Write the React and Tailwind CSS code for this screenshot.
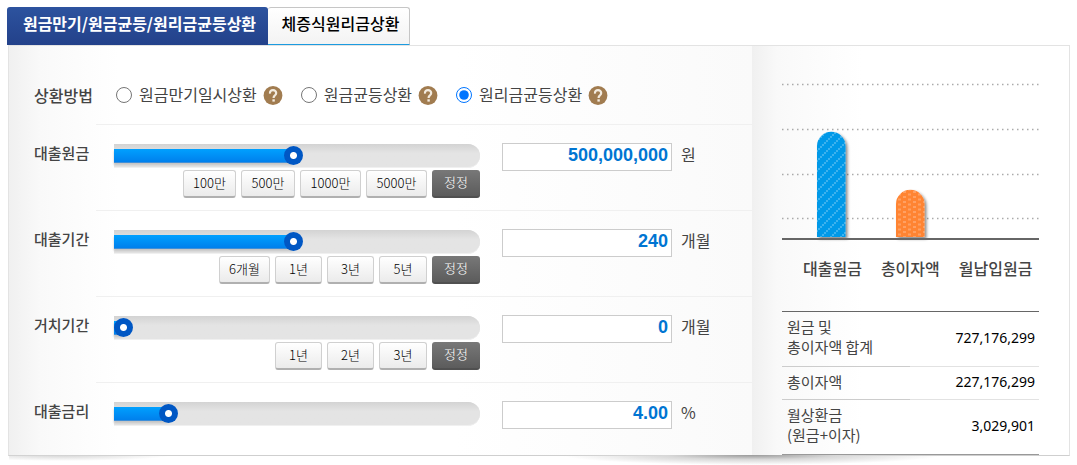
import { useId, useState } from "react";

function HelpButton({ label }) {
  return (
    <button type="button" aria-label={label} className="ml-1.5 size-5 shrink-0">
      <svg viewBox="0 0 20 20" className="size-5">
        <circle cx="10" cy="10.5" r="9.4" fill="#a17c50" />
        <path
          d="M7 8.600C6.700 6.300 8 5.200 10 5.200s3.200 1.100 3.200 2.900c0 1.500-.9 2-1.700 2.700-.7.600-.9 1-.9 2.200"
          fill="none"
          stroke="#f3ebdf"
          strokeWidth="2.200"
        />
        <rect x="9.400" y="14.300" width="2.400" height="2.300" fill="#f3ebdf" />
      </svg>
    </button>
  );
}

function Method({ label, value, selected, onSelect }) {
  const id = useId();
  return (
    <div className="flex items-center">
      <input
        id={id}
        type="radio"
        name="method"
        checked={selected === value}
        onChange={() => onSelect(value)}
        className="size-4 accent-[#0075ff]"
      />
      <label htmlFor={id} className="ml-[7px] pb-0.5 text-base leading-5">
        {label}
      </label>
      <HelpButton label={`${label} 도움말`} />
    </div>
  );
}

function StepButton({ children, wide }) {
  return (
    <button
      type="button"
      className={`h-7 rounded-[3px] border border-b-2 border-[#d0d0d0] border-b-[#b0b0b0] bg-linear-to-b from-white to-[#ebebeb] pb-0.5 text-[13px] leading-5 font-light text-black ${wide}`}
    >
      {children}
    </button>
  );
}

function SliderRow({ label, unit, initial, amount, steps, stepWidths }) {
  const id = useId();
  const [position, setPosition] = useState(initial);
  const [text, setText] = useState(amount);
  return (
    <div className="flex items-start">
      <label htmlFor={id} className="w-[87px] shrink-0 pt-[19px] pl-[25px] text-[15px] leading-5 font-medium">
        {label}
      </label>
      <div className="flex min-w-0 flex-1 items-start border-t border-[#f0f0f0] pt-[18px] pl-[18px]">
        <div className="min-w-0 flex-1">
          <div className="relative mt-px h-6 rounded-r-full border-b border-[#f0f0f0] bg-[#e2e2e2] bg-linear-to-b from-[#d3d3d3] to-[#e4e4e4] to-40%">
            <div
              className="absolute top-[5px] left-0 h-3.5 border-b border-[#3f8fd8] bg-linear-to-b from-[#00a0ff] to-[#0080ec] shadow-[0_2px_2px_#c4c4c4]"
              style={{ width: `calc((100% - 19px) * ${position / 100} + 9px)` }}
            />
            <input
              type="range"
              aria-label={label}
              min="0"
              max="100"
              value={position}
              onChange={(e) => setPosition(Number(e.target.value))}
              className="absolute inset-0 h-full w-full appearance-none bg-transparent [&::-webkit-slider-thumb]:size-[19px] [&::-webkit-slider-thumb]:appearance-none [&::-webkit-slider-thumb]:rounded-full [&::-webkit-slider-thumb]:bg-[radial-gradient(circle,#fff_0,#fff_3px,#0057c4_4px,#0057c4_100%)]"
            />
          </div>
          {steps && (
            <div className="mt-0.5 mb-3 flex justify-end gap-[5px]">
              {steps.map((s, i) => (
                <StepButton key={s} wide={stepWidths[i]}>
                  {s}
                </StepButton>
              ))}
              <button
                type="button"
                className="h-7 w-12 rounded-[3px] border-b-2 border-[#505050] bg-linear-to-b from-[#787878] to-[#5c5c5c] pb-0.5 text-[13px] leading-5 font-light text-white"
              >
                정정
              </button>
            </div>
          )}
        </div>
        <input
          id={id}
          type="text"
          value={text}
          onChange={(e) => setText(e.target.value)}
          className="ml-[22px] h-7 w-[170px] shrink-0 border border-[#ccc] bg-white pr-[3px] pb-1 text-right font-['Liberation_Sans',sans-serif] text-lg leading-5 font-bold text-[#0075d2]"
        />
        <span className="w-20 shrink-0 pt-px pl-[9px] text-base leading-5">{unit}</span>
      </div>
    </div>
  );
}

function Chart() {
  const gridLines = [39, 84, 129, 173];
  return (
    <svg viewBox="0 0 257 196" className="block h-[196px] w-full" role="img" aria-label="대출원금과 총이자액">
      <defs>
        <pattern id="stripes" width="10" height="10" patternUnits="userSpaceOnUse">
          <rect width="10" height="10" fill="#0099e8" />
          <path
            d="M0 8h2v2h-2zM2 6h2v2h-2zM4 4h2v2h-2zM6 2h2v2h-2zM8 0h2v2h-2z"
            fill="#3db2ee"
          />
        </pattern>
        <pattern id="dots" width="10" height="5" patternUnits="userSpaceOnUse">
          <rect width="10" height="5" fill="#ff8432" />
          <path d="M1 0h3v2h-3zM6 2.500h3v2h-3z" fill="#ffa062" />
        </pattern>
        <filter id="shade" x="-20%" y="-10%" width="150%" height="120%">
          <feDropShadow dx="2" dy="2" stdDeviation="1.500" floodOpacity="0.450" />
        </filter>
      </defs>
      {gridLines.map((y) => (
        <line key={y} x1="0" x2="257" y1={y - 0.5} y2={y - 0.5} stroke="#aaa" strokeWidth="1.300" strokeDasharray="1.500 3.500" />
      ))}
      <path d="M35 191V100a14 14 0 0 1 28.500 0V191z" fill="url(#stripes)" filter="url(#shade)" />
      <path d="M114 191V158a14 14 0 0 1 28.500 0V191z" fill="url(#dots)" filter="url(#shade)" />
      <rect y="192" width="257" height="2" fill="#666" />
    </svg>
  );
}

function ResultRow({ children, value, tall, last }) {
  return (
    <tr>
      <th
        scope="row"
        className={`w-32 border-b pt-[5px] pl-[5px] text-left text-[15px] leading-5 font-normal ${tall ? "pb-[9px]" : "pb-[7px]"} ${last ? "border-[#999]" : "border-[#ccc]"}`}
      >
        {children}
      </th>
      <td
        className={`border-b pr-1 pb-0.5 text-right font-['Noto_Sans',sans-serif] text-sm leading-5 text-black ${last ? "border-[#999]" : "border-[#e2e2e2]"}`}
      >
        {value}
      </td>
    </tr>
  );
}

export default function App() {
  const [method, setMethod] = useState("annuity");
  return (
    <main className="bg-white px-[7px] pt-[7px] font-['Noto_Sans_CJK_KR',sans-serif] text-[#444]">
      <nav className="flex h-[38px] text-base leading-5">
        <button
          type="button"
          className="w-[261px] rounded-t-[3px] bg-linear-to-b from-[#2d539f] to-[#23418a] pb-1.5 pl-1 font-bold whitespace-nowrap text-white"
        >
          원금만기/원금균등/원리금균등상환
        </button>
        <button
          type="button"
          className="w-[142px] rounded-t-[3px] border border-l-0 border-[#c6c6c6] border-b-[#1c9be0] bg-linear-to-b from-white to-[#f3f3f3] pb-1.5 pl-1 font-medium whitespace-nowrap text-black"
        >
          체증식원리금상환
        </button>
      </nav>
      <section className="ml-px flex border border-[#e3e3e3] border-b-[#cfcfcf]">
        <div className="min-w-0 flex-1 bg-[linear-gradient(to_right,#f0f0f0,#f9f9f9_30px,#fdfdfd_80px,#fff_110px,#fff_60%,#fafafa)]">
          <div role="radiogroup" aria-label="상환방법" className="flex h-[78px] items-center pt-5 pl-[25px]">
            <span className="w-[82px] text-base leading-5 font-medium">상환방법</span>
            <div className="flex gap-[18px]">
              <Method label="원금만기일시상환" value="bullet" selected={method} onSelect={setMethod} />
              <Method label="원금균등상환" value="principal" selected={method} onSelect={setMethod} />
              <Method label="원리금균등상환" value="annuity" selected={method} onSelect={setMethod} />
            </div>
          </div>
          <SliderRow
            label="대출원금"
            unit="원"
            initial={49}
            amount="500,000,000"
            steps={["100만", "500만", "1000만", "5000만"]}
            stepWidths={["w-[53px]", "w-[54px]", "w-[61px]", "w-[61px]"]}
          />
          <SliderRow
            label="대출기간"
            unit="개월"
            initial={49}
            amount="240"
            steps={["6개월", "1년", "3년", "5년"]}
            stepWidths={["w-[51px]", "w-[47px]", "w-[47px]", "w-12"]}
          />
          <SliderRow
            label="거치기간"
            unit="개월"
            initial={0}
            amount="0"
            steps={["1년", "2년", "3년"]}
            stepWidths={["w-[47px]", "w-[47px]", "w-12"]}
          />
          <SliderRow label="대출금리" unit="%" initial={13} amount="4.00" />
        </div>
        <aside className="w-[317px] shrink-0 bg-[linear-gradient(to_right,#f0f0f0,#f9f9f9_25px,#fff_110px)] px-[30px]">
          <Chart />
          <div className="flex gap-[19px] pt-4 pl-[21px] text-base leading-5 font-medium whitespace-nowrap">
            <span>대출원금</span>
            <span>총이자액</span>
            <span>월납입원금</span>
          </div>
          <table className="mt-[33px] w-full border-collapse border-t border-[#666]">
            <tbody>
              <ResultRow value="727,176,299" tall>
                원금 및<br />
                총이자액 합계
              </ResultRow>
              <ResultRow value="227,176,299">총이자액</ResultRow>
              <ResultRow value="3,029,901" tall last>
                월상환금
                <br />
                (원금+이자)
              </ResultRow>
            </tbody>
          </table>
        </aside>
      </section>
      <div className="-mt-px ml-0.5 h-2.5 bg-[radial-gradient(ellipse_190px_10px_at_70%_0,#999,#d8d8d8_45%,transparent),radial-gradient(ellipse_110px_6px_at_5%_0,#d4d4d4,transparent)]" />
    </main>
  );
}
